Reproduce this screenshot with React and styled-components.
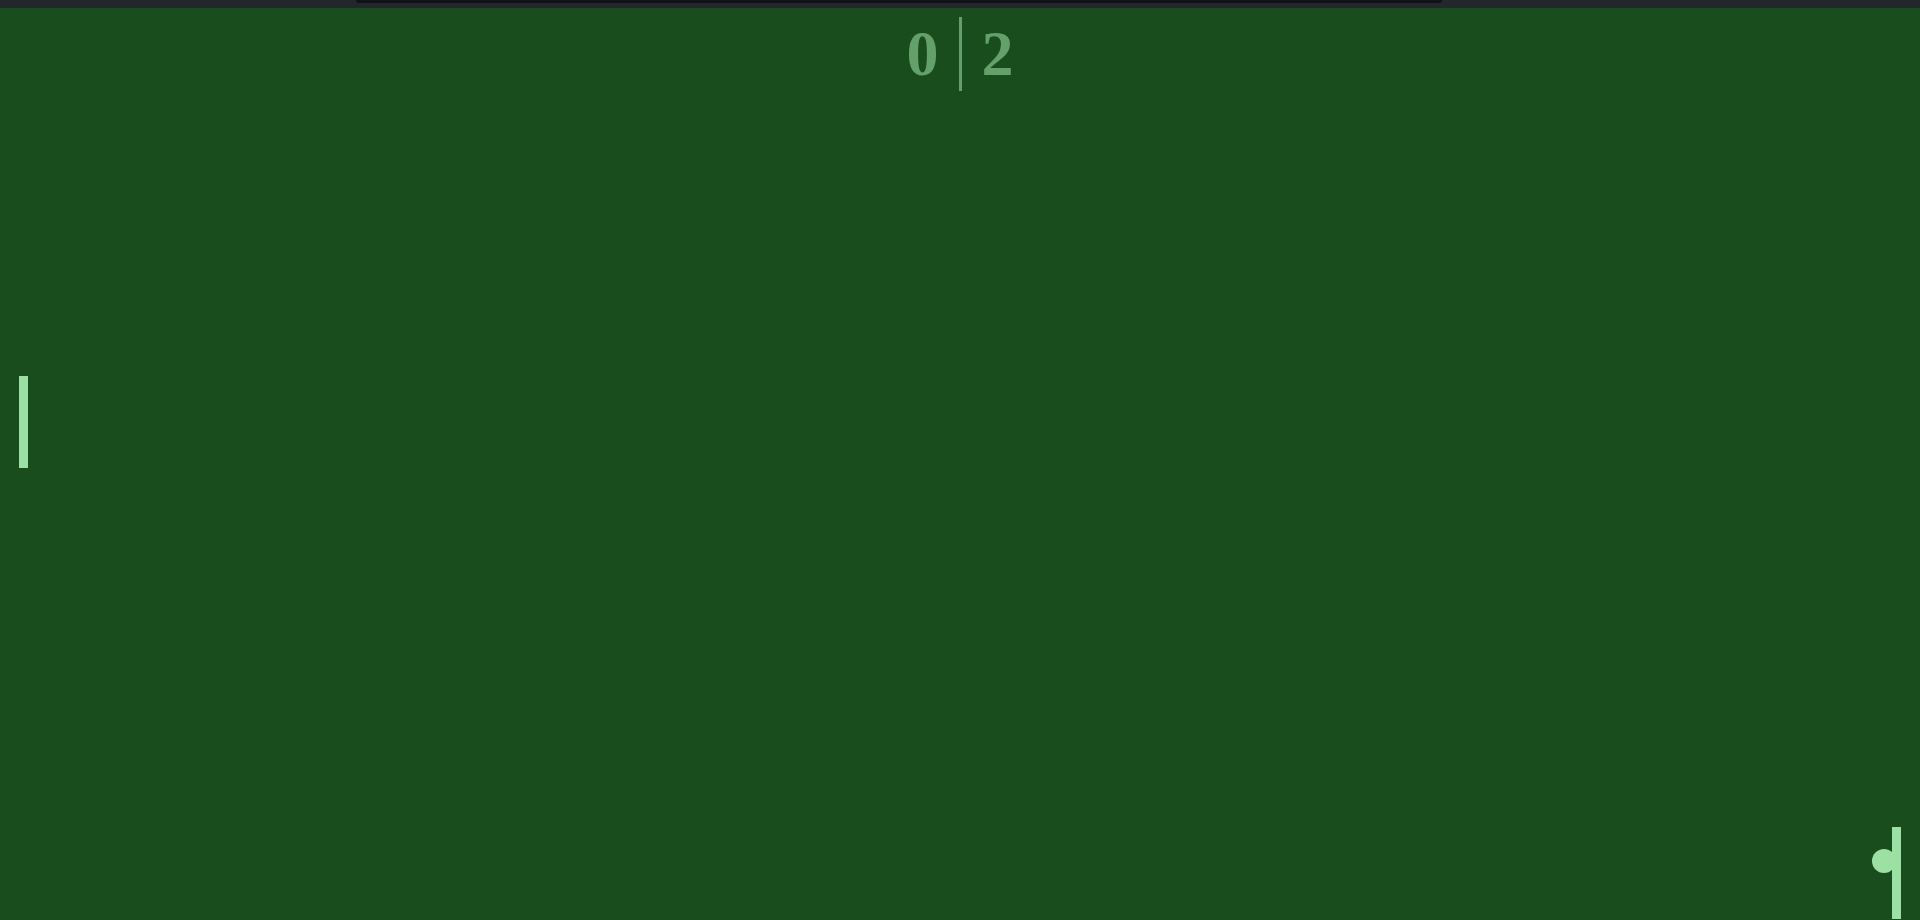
import React from "react";
import styled, { createGlobalStyle } from "styled-components";

const Global = createGlobalStyle`
  html, body { margin: 0; padding: 0; height: 100%; overflow: hidden; background: #1a4d1e; }
  #root { height: 100%; }
`;

const Page = styled.div`
  display: flex;
  flex-direction: column;
  width: 1920px;
  height: 920px;
`;

const TopBar = styled.div`
  height: 8px;
  flex: 0 0 8px;
  background: #23262a;
  display: flex;
  align-items: flex-start;
  padding-left: 356px;
`;

const Notch = styled.div`
  width: 1086px;
  height: 3px;
  background: #101215;
  border-radius: 0 0 5px 5px;
`;

const Court = styled.div`
  position: relative;
  flex: 1;
  background: #1a4d1e;
  overflow: hidden;
`;

const Score = styled.div`
  display: flex;
  justify-content: center;
  align-items: center;
  gap: 20px;
  padding-top: 9px;
  font-family: "Liberation Serif", "Times New Roman", serif;
  font-weight: 700;
  font-size: 64px;
  line-height: 1;
  color: #64a06a;
`;

const Digit = styled.span`
  display: block;
`;

const Divider = styled.div`
  width: 3px;
  height: 74px;
  background: #64a06a;
`;

const Paddle = styled.div`
  position: absolute;
  width: 9px;
  height: 92px;
  background: #9de0a3;
  top: ${(p) => p.$top}px;
  ${(p) => (p.$side === "left" ? "left: 19px;" : "right: 19px;")}
`;

const Ball = styled.div`
  position: absolute;
  width: 24px;
  height: 24px;
  border-radius: 50%;
  background: #9de0a3;
  left: ${(p) => p.$x}px;
  top: ${(p) => p.$y}px;
`;

export default function App() {
  return (
    <>
      <Global />
      <Page>
        <TopBar>
          <Notch />
        </TopBar>
        <Court>
          <Score>
            <Digit>0</Digit>
            <Divider />
            <Digit>2</Digit>
          </Score>
          <Paddle $side="left" $top={368} />
          <Ball $x={1872} $y={841} />
          <Paddle $side="right" $top={819} />
        </Court>
      </Page>
    </>
  );
}
